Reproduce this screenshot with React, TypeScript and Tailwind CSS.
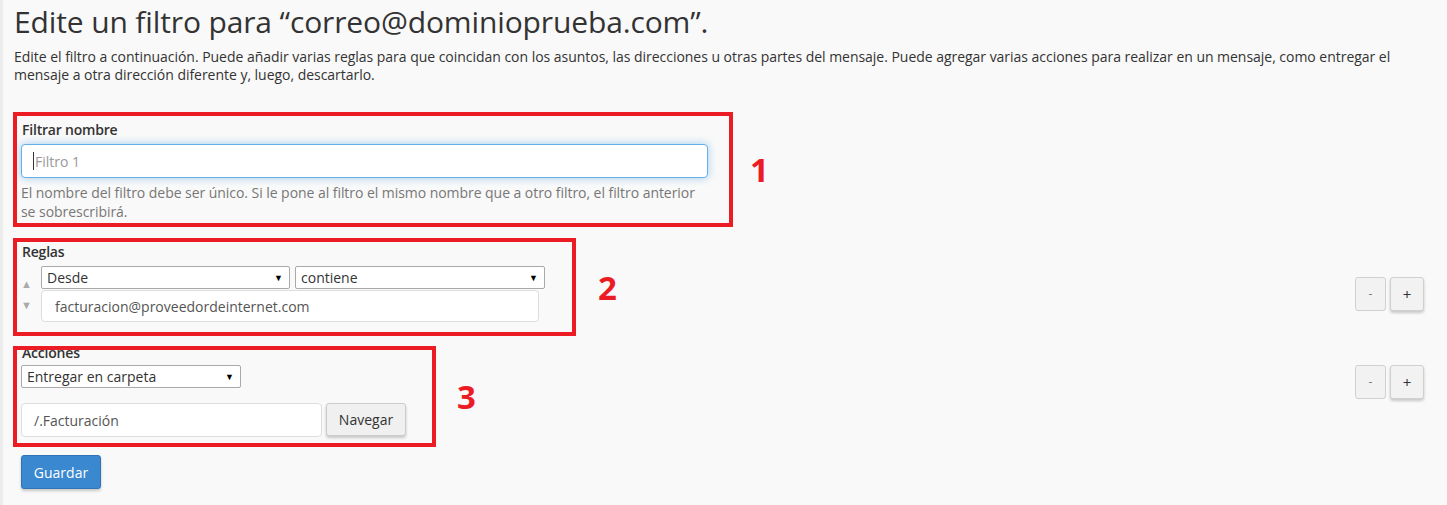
import React from "react";

const Caret = () => <span className="text-[9px] leading-none text-black">▼</span>;

const Select = ({ label, w }: { label: string; w: string }) => (
  <div className={`${w} h-[23px] flex items-center justify-between bg-white border border-[#a9a9a9] rounded-[2px] pl-[5px] pr-[6px] text-[14px] text-[#333]`}>
    <span>{label}</span>
    <Caret />
  </div>
);

const Overlay = () => (
  <div className="absolute inset-0 border-4 border-[#ec1c24] pointer-events-none" />
);

const Num = ({ n }: { n: string }) => (
  <span className="text-[33px] font-bold leading-none text-[#ec1c24]">{n}</span>
);

const SmallBtns = () => (
  <div className="flex gap-[4px]">
    <div className="w-[31px] h-[34px] flex items-center justify-center bg-[#f2f2f2] border border-[#d0d0d0] rounded-[3px] text-[12px] text-[#777]">-</div>
    <div className="w-[34px] h-[34px] flex items-center justify-center bg-[#f2f2f2] border border-[#d0d0d0] rounded-[3px] text-[15px] text-[#333] shadow-[0_2px_3px_rgba(0,0,0,0.2)]">+</div>
  </div>
);

const App = () => {
  return (
    <div className="min-h-screen bg-[#f9f9f9] border-l-[3px] border-[#ececec] font-['Open_Sans',sans-serif] text-[#333]">
      <div className="pl-[10px] pr-[23px] pt-[2px]">
        <h1 className="text-[30px] leading-[40px] tracking-[-0.13px] pl-px">
          Edite un filtro para “correo@dominioprueba.com”.
        </h1>
        <p className="mt-[6px] text-[14px] leading-[18px] tracking-[-0.03px] pl-px max-w-[1415px]">
          Edite el filtro a continuación. Puede añadir varias reglas para que coincidan con los asuntos, las direcciones u otras partes del mensaje. Puede agregar varias acciones para realizar en un mensaje, como entregar el mensaje a otra dirección diferente y, luego, descartarlo.
        </p>

        {/* sección 1 */}
        <div className="mt-[28px] flex items-center gap-[17px]">
          <div className="relative w-[720px] h-[115px] pl-[8px] pr-[25px] pt-[9px]">
            <div className="text-[14px] leading-[18px] font-semibold tracking-[-0.2px] pl-px">Filtrar nombre</div>
            <div className="mt-[5px] h-[34px] flex items-center bg-white border border-[#66afe9] rounded-[4px] shadow-[0_0_8px_rgba(102,175,233,0.6)] pl-[11px] text-[14px] text-[#999]">
              <span className="w-px h-[18px] bg-[#333] mr-px" />
              Filtro 1
            </div>
            <p className="mt-[5px] text-[14px] leading-[19px] tracking-[-0.05px] text-[#777]">
              El nombre del filtro debe ser único. Si le pone al filtro el mismo nombre que a otro filtro, el filtro anterior se sobrescribirá.
            </p>
            <Overlay />
          </div>
          <Num n="1" />
        </div>

        {/* sección 2 */}
        <div className="mt-[11px] flex">
          <div className="relative w-[563px] h-[98px] pl-[4px] pt-[5px]">
            <div className="text-[14px] leading-[18px] font-semibold tracking-[-0.2px] pl-[5px]">Reglas</div>
            <div className="mt-[5px] flex">
              <div className="w-[24px] flex flex-col items-start pl-[4px] pt-[12px] gap-[10px] text-[11px] leading-[11px] text-[#aaa]">
                <span>▲</span>
                <span>▼</span>
              </div>
              <div>
                <div className="flex gap-[5px]">
                  <Select label="Desde" w="w-[249px]" />
                  <Select label="contiene" w="w-[250px]" />
                </div>
                <div className="mt-px w-[498px] h-[32px] flex items-center bg-white border border-[#ddd] rounded-[4px] pl-[13px] text-[14px] text-[#555]">
                  facturacion@proveedordeinternet.com
                </div>
              </div>
            </div>
            <Overlay />
          </div>
          <div className="self-center ml-[22px] mt-[2px]">
            <Num n="2" />
          </div>
          <div className="ml-auto mt-[39px]">
            <SmallBtns />
          </div>
        </div>

        {/* sección 3 */}
        <div className="mt-[10px] flex">
          <div className="relative w-[423px] h-[101px] pl-[8px]">
            <div className="-mt-[2px] text-[14px] leading-[18px] font-semibold tracking-[-0.2px] pl-px">Acciones</div>
            <div className="mt-[3px]">
              <Select label="Entregar en carpeta" w="w-[220px]" />
            </div>
            <div className="mt-[15px] flex gap-[4px]">
              <div className="w-[301px] h-[34px] flex items-center bg-white border border-[#ddd] rounded-[4px] pl-[12px] text-[14px] text-[#555]">
                /.Facturación
              </div>
              <button className="w-[80px] h-[33px] bg-[#f0f0f0] border border-[#ccc] rounded-[3px] text-[14px] text-[#333] shadow-[0_2px_3px_rgba(0,0,0,0.2)]">
                Navegar
              </button>
            </div>
            <Overlay />
          </div>
          <div className="self-center ml-[21px] mt-[2px]">
            <Num n="3" />
          </div>
          <div className="ml-auto mt-[19px]">
            <SmallBtns />
          </div>
        </div>

        <button className="mt-[8px] ml-[8px] w-[80px] h-[34px] bg-[#3a88cf] border border-[#2f74b5] rounded-[3px] text-[14px] text-white shadow-[0_2px_3px_rgba(0,0,0,0.2)]">
          Guardar
        </button>
      </div>
    </div>
  );
};

export default App;
